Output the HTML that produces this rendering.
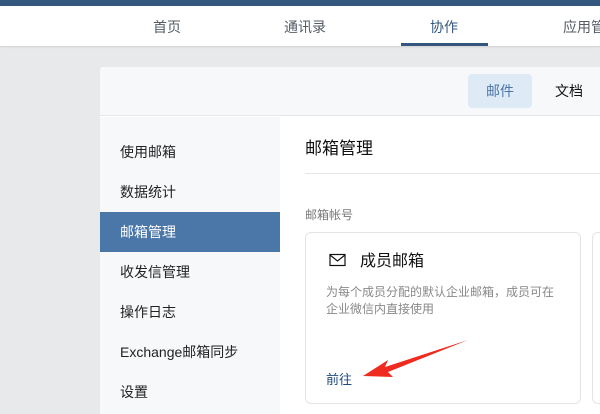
<!DOCTYPE html>
<html><head><meta charset="utf-8"><style>
*{margin:0;padding:0;box-sizing:border-box}
body{width:600px;height:414px;overflow:hidden;background:#e8e9eb;font-family:"Liberation Sans","Noto Sans CJK SC",sans-serif;position:relative}
.a{position:absolute}
.top{left:0;top:0;width:600px;height:6px;background:#34577f}
.nav{left:0;top:6px;width:600px;height:40px;background:#fff;box-shadow:0 1px 2px rgba(0,0,0,.1);overflow:hidden}
.nav span{position:absolute;top:11px;font-size:14px;color:#555c66;white-space:nowrap}
.panel{left:100px;top:67px;width:500px;height:347px;background:#fff;border-radius:3px 0 0 0;overflow:hidden}
.hdr{left:0;top:0;width:500px;height:49px;background:#f7f8fa;border-bottom:1px solid #e4e6ea}
.side{left:0;top:50px;width:180px;height:300px;background:#f7f8fa}
.side div{position:absolute;left:0;width:180px;height:40px;line-height:40px;padding-left:20px;font-size:14px;color:#222;white-space:nowrap}
</style></head><body>
<div class="a top"></div>
<div class="a nav">
<span style="left:153px">首页</span>
<span style="left:284px">通讯录</span>
<span style="left:430px;color:#34577f">协作</span>
<span style="left:563px">应用管理</span>
<div class="a" style="left:401px;top:37px;width:87px;height:3px;background:#34577f"></div>
</div>
<div class="a panel">
<div class="a hdr">
<div class="a" style="left:368px;top:7px;width:64px;height:34px;background:#dfeaf7;border-radius:4px;color:#4a76a8;font-size:14px;line-height:34px;text-align:center">邮件</div>
<div class="a" style="left:455px;top:7px;font-size:14px;line-height:34px;color:#111">文档</div>
</div>
<div class="a side">
<div style="top:15px">使用邮箱</div>
<div style="top:55px">数据统计</div>
<div style="top:95px;background:#4a76a8;color:#fff">邮箱管理</div>
<div style="top:135px">收发信管理</div>
<div style="top:175px">操作日志</div>
<div style="top:215px">Exchange邮箱同步</div>
<div style="top:255px">设置</div>
</div>
<div class="a" style="left:205px;top:67px;font-size:17px;color:#111">邮箱管理</div>
<div class="a" style="left:205px;top:106px;width:295px;height:1px;background:#e4e6ea"></div>
<div class="a" style="left:205px;top:139px;font-size:12px;color:#777">邮箱帐号</div>
<div class="a" style="left:205px;top:165px;width:276px;height:172px;border:1px solid #e2e4e8;border-radius:6px"></div>
<div class="a" style="left:492px;top:165px;width:20px;height:172px;border:1px solid #e2e4e8;border-radius:6px"></div>
<svg class="a" style="left:229px;top:186px" width="17" height="14" viewBox="0 0 17 14"><rect x="1" y="1.5" width="15" height="11" fill="none" stroke="#111" stroke-width="1.2"/><path d="M1 2l7.5 6 7.5-6" fill="none" stroke="#111" stroke-width="1.2"/></svg>
<div class="a" style="left:260px;top:180px;font-size:16px;color:#111">成员邮箱</div>
<div class="a" style="left:226px;top:217px;width:232px;font-size:12px;line-height:17px;color:#888">为每个成员分配的默认企业邮箱，成员可在企业微信内直接使用</div>
<div class="a" style="left:226px;top:302px;font-size:13px;color:#1e4c7e">前往</div>
</div>
<svg class="a" style="left:355px;top:335px" width="120" height="50" viewBox="0 0 120 50"><path d="M113 5 L30 32 L33 25 L8 41 L38 42 L33 37 Z" fill="#ef2b1f"/></svg>
</body></html>
